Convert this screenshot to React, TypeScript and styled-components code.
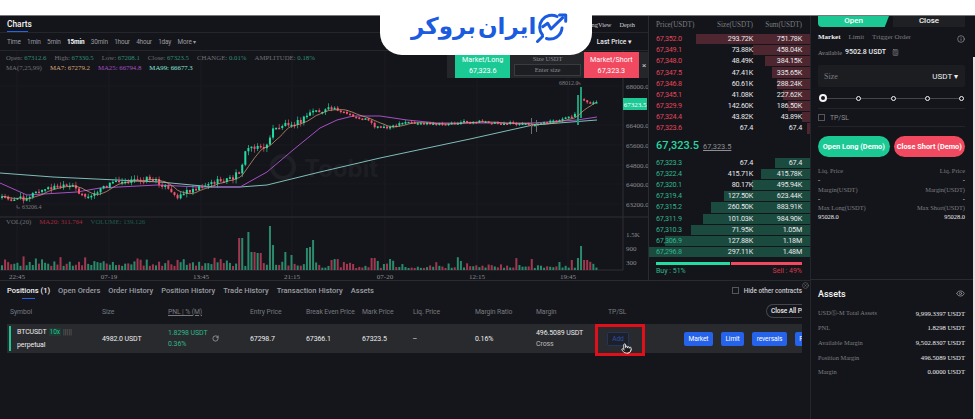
import styled, { createGlobalStyle } from "styled-components";
import { CircleX, Eye, Info, Pointer, RotateCw, Calculator } from "lucide-react";

const sans = `Roboto, "Noto Sans", sans-serif`;
const serif = `"Liberation Serif", serif`;
const green = "#1cc994";
const red = "#f1495f";
const blue = "#2563eb";
const COLUMNS = "92px 66px 82px 56px 56px 51px 62px 61px 72px 1fr";

const GlobalStyle = createGlobalStyle`
  html, body {
    margin: 0;
    background: #fff;
    overflow: hidden;
  }
  * {
    box-sizing: border-box;
  }
`;

const Page = styled.div`
  position: relative;
  width: 975px;
  height: 419px;
  overflow: hidden;
  display: flex;
  flex-direction: column;
  font-family: ${sans};
  color: #e8e8ea;
`;

const TopStrip = styled.div`
  height: 16px;
  flex: none;
  background: #fff;
  border-bottom: 1px solid #77787b;
`;

const Workspace = styled.div`
  flex: 1;
  display: flex;
  min-height: 0;
`;

const MainColumn = styled.div`
  width: 810px;
  display: flex;
  flex-direction: column;
`;

const Upper = styled.div`
  height: 265px;
  display: flex;
  border-bottom: 1px solid #2a2b30;
`;

const ChartPanel = styled.section`
  position: relative;
  width: 648px;
  background: #14151a;
`;

const ChartHeader = styled.div`
  height: 17px;
  display: flex;
  justify-content: space-between;
  align-items: center;
  padding: 0 13px 0 7px;
  border-bottom: 1px solid #25262b;
`;

const ChartTitle = styled.div`
  position: relative;
  font-size: 8.4px;
  font-weight: 500;
  color: #f4f4f5;
  line-height: 16px;
  width: 21px;

  &::after {
    content: "";
    position: absolute;
    left: 0;
    right: 0;
    bottom: 0;
    height: 1px;
    background: ${blue};
  }
`;

const ViewTabs = styled.div`
  display: flex;
  gap: 8px;
  font-family: ${serif};
  font-size: 6.4px;
  color: #cfd0d3;
`;

const IntervalBar = styled.div`
  height: 18px;
  display: flex;
  align-items: center;
  gap: 6.3px;
  padding: 0 16px 0 7px;
  border-bottom: 1px solid #25262b;
`;

const Interval = styled.span<{ $active?: boolean }>`
  font-size: 6.4px;
  letter-spacing: -0.15px;
  font-weight: ${(p) => (p.$active ? 700 : 400)};
  color: ${(p) => (p.$active ? "#f6f6f7" : "#9a9ca1")};
`;

const LastPrice = styled.span`
  margin-left: auto;
  font-size: 6.6px;
  font-weight: 500;
  color: #e8e8ea;
`;

const Legend = styled.div<{ $top: number; $gap: number }>`
  position: absolute;
  left: 6px;
  top: ${(p) => p.$top}px;
  display: flex;
  gap: ${(p) => p.$gap}px;
  font-family: ${serif};
  font-size: 6.8px;
  line-height: 9px;
  white-space: nowrap;
  color: #6f7176;
`;

const LegendItem = styled.span<{ $color?: string }>`
  color: ${(p) => p.$color ?? "inherit"};

  b {
    font-weight: 400;
    color: #2f9176;
  }
`;

const ChartSvg = styled.svg`
  display: block;
`;

const OrderStrip = styled.div`
  position: absolute;
  left: 447px;
  top: 36px;
  width: 201px;
  height: 26px;
  display: flex;
  align-items: stretch;
  padding-left: 8px;
  background: #25262a;
`;

const QuickTrade = styled.div<{ $color: string }>`
  width: 56px;
  background: ${(p) => p.$color};
  color: #fff;
  font-size: 7.2px;
  line-height: 11px;
  text-align: center;
  display: flex;
  flex-direction: column;
  justify-content: center;
`;

const SizeBox = styled.div`
  width: 67px;
  margin: 0 3px 0 4px;
  font-family: ${serif};
  font-size: 6.5px;
  color: #8b8d92;
  text-align: center;
  line-height: 10px;
  display: flex;
  flex-direction: column;
  justify-content: space-between;
  padding: 2px 0 3px;
`;

const SizeField = styled.div`
  border: 1px solid #3a3b40;
  background: #1d1e22;
  height: 12px;
`;

const StripClose = styled.span`
  margin-left: 1px;
  align-self: center;
  width: 8px;
  text-align: center;
  font-size: 8px;
  color: #c9cacd;
`;

const OrderBook = styled.section`
  width: 162px;
  padding: 0;
  background: #14151a;
  border-left: 1px solid #2a2b30;
  display: flex;
  flex-direction: column;
`;

const BookRow = styled.div`
  position: relative;
  height: 11.2px;
  display: grid;
  grid-template-columns: 50px 47px 49px;
  align-items: center;
  padding-left: 7px;
  font-size: 7.2px;
  letter-spacing: -0.2px;
  line-height: 10px;
  white-space: nowrap;
`;

const BookHead = styled(BookRow)`
  height: 17.4px;
  font-family: ${serif};
  font-size: 7.2px;
  letter-spacing: 0;
  color: #7b7d82;
`;

const Cell = styled.span`
  position: relative;
  text-align: right;
`;

const PriceCell = styled.span<{ $side: "ask" | "bid" }>`
  position: relative;
  color: ${(p) => (p.$side === "ask" ? "#e0455a" : "#2fb68c")};
`;

const DepthBar = styled.i<{ $side: "ask" | "bid" }>`
  position: absolute;
  right: 0;
  top: 0.5px;
  bottom: 0.5px;
  background: ${(p) => (p.$side === "ask" ? "#4d2630" : "#1b4a3e")};
`;

const MidRow = styled.div`
  height: 23px;
  display: flex;
  align-items: baseline;
  padding: 5px 0 0 7px;
  gap: 4px;
`;

const MidPrice = styled.span`
  font-size: 11px;
  font-weight: 500;
  color: #27d6a0;
`;

const MidMark = styled.span`
  font-size: 7.4px;
  color: #8d8f94;
  text-decoration: underline;
`;

const Ratio = styled.div`
  display: flex;
  gap: 1px;
  margin: 4px 8px 0 7px;
  height: 3px;
`;

const RatioPart = styled.div<{ $color: string; $grow: number }>`
  flex: ${(p) => p.$grow};
  background: ${(p) => p.$color};
`;

const RatioLabels = styled.div`
  display: flex;
  justify-content: space-between;
  margin: 1px 8px 0 7px;
  font-size: 7px;
  line-height: 10px;
`;

const RatioLabel = styled.span<{ $color: string }>`
  color: ${(p) => p.$color};
`;

const Positions = styled.section`
  flex: 1;
  background: #15161b;
  display: flex;
  flex-direction: column;
`;

const TabBar = styled.div`
  position: relative;
  height: 19px;
  display: flex;
  align-items: center;
  gap: 8px;
  padding-left: 7px;
`;

const Tab = styled.span<{ $active?: boolean }>`
  position: relative;
  font-size: 7.55px;
  font-weight: 500;
  white-space: nowrap;
  color: ${(p) => (p.$active ? "#f4f4f5" : "#9a9ca1")};

  ${(p) =>
    p.$active &&
    `&::after {
      content: "";
      position: absolute;
      left: 15px;
      width: 13px;
      bottom: -4px;
      height: 1px;
      background: ${blue};
    }`}
`;

const HideOther = styled.label`
  margin-left: auto;
  margin-right: 8px;
  display: flex;
  align-items: center;
  gap: 5px;
  font-size: 6.4px;
  font-weight: 500;
  color: #c8c9cc;
  white-space: nowrap;
`;

const Tick = styled.span`
  width: 7px;
  height: 7px;
  flex: none;
  border: 1px solid #55565b;
`;

const DismissIcon = styled(CircleX)`
  position: absolute;
  right: 1px;
  top: 1px;
  color: #6e7074;
`;

const TableHead = styled.div`
  height: 24px;
  width: 802px;
  padding-left: 10px;
  display: grid;
  grid-template-columns: ${COLUMNS};
  align-items: center;
  font-size: 6.8px;
  letter-spacing: -0.1px;
  color: #777a7f;
  white-space: nowrap;
`;

const Underlined = styled.span`
  text-decoration: underline;
`;

const TpHead = styled.div`
  display: flex;
  align-items: center;
  justify-content: space-between;
`;

const CloseAll = styled.div`
  width: 36px;
  height: 14px;
  margin-top: -2px;
  overflow: hidden;
  padding-left: 4px;
  border: 1px solid #45464b;
  border-right: none;
  border-radius: 8px 0 0 8px;
  font-size: 6.6px;
  line-height: 12px;
  font-weight: 500;
  white-space: nowrap;
  color: #e8e8ea;
`;

const PositionRow = styled.div`
  width: 795px;
  height: 29px;
  margin-left: 7px;
  padding-left: 3px;
  display: grid;
  grid-template-columns: ${COLUMNS};
  align-items: center;
  background: #292a2d;
  font-size: 7px;
  letter-spacing: -0.1px;
  color: #ececee;
  white-space: nowrap;
  overflow: hidden;
`;

const SymbolCell = styled.div`
  height: 25px;
  margin-left: -1px;
  border-left: 2px solid ${green};
  padding-left: 6px;
  display: flex;
  flex-direction: column;
  justify-content: space-around;
`;

const SymbolLine = styled.div`
  display: flex;
  align-items: center;
  gap: 2px;
`;

const Leverage = styled.span`
  color: ${green};
  background: #1e3a33;
  padding: 0 1px;
  font-size: 6.6px;
`;

const LevelBars = styled.span`
  color: #6f7176;
  letter-spacing: 0.2px;
  font-size: 6.6px;
`;

const StackCell = styled.div`
  display: flex;
  flex-direction: column;
  gap: 2px;
  line-height: 9px;
`;

const PnlCell = styled.div`
  display: flex;
  align-items: center;
  gap: 4px;
  color: #2fb68c;
  line-height: 9px;
`;

const MutedLine = styled.span`
  color: #b9babd;
`;

const AddButton = styled.div`
  width: 22px;
  height: 14px;
  margin-right: 47px;
  border: 1px solid #22345f;
  border-radius: 2px;
  background: #1d2027;
  color: #2a4fb0;
  font-size: 6.6px;
  line-height: 12px;
  text-align: center;
`;

const Actions = styled.div`
  display: flex;
  gap: 8px;
  margin-left: -1px;
`;

const ActionButton = styled.div`
  height: 14px;
  padding: 0 4.5px;
  background: ${blue};
  border-radius: 2px;
  color: #fff;
  font-size: 6.6px;
  line-height: 14px;
`;

const RedFrame = styled.div`
  position: absolute;
  left: 595px;
  top: 324px;
  width: 50px;
  height: 32px;
  border: 3px solid #e0101a;
  pointer-events: none;
`;

const HandCursor = styled(Pointer)`
  position: absolute;
  left: 621px;
  top: 343px;
  color: #f2f2f2;
  fill: #1b1b1d;
`;

const SidePanel = styled.aside`
  position: relative;
  width: 165px;
  background: #14151a;
  border-left: 1px solid #25262b;
  display: flex;
  flex-direction: column;
`;

const SideScroll = styled.div`
  position: absolute;
  right: 0;
  top: 41px;
  bottom: 0;
  width: 2px;
  background: #dfe3e4;
`;

const TradeCard = styled.div`
  height: 264px;
  padding: 0 10px 0 7px;
  border-bottom: 1px solid #2a2b30;
`;

const SideTabs = styled.div`
  display: flex;
  gap: 4px;
  height: 11px;
`;

const OpenTab = styled.div`
  width: 71px;
  background: ${green};
  color: #fff;
  font-size: 8px;
  font-weight: 500;
  line-height: 10px;
  text-align: center;
  clip-path: polygon(0 0, 100% 0, 94% 100%, 0 100%);
  border-radius: 0 0 0 4px;
`;

const CloseTab = styled.div`
  flex: 1;
  background: #1f2024;
  color: #f0f0f1;
  font-size: 8px;
  font-weight: 500;
  line-height: 10px;
  text-align: center;
`;

const OrderTypes = styled.div`
  display: flex;
  align-items: center;
  gap: 8px;
  margin-top: 2px;
  height: 15px;
  font-family: ${serif};
  font-size: 7px;
  color: #7c7e83;
`;

const OrderType = styled.span<{ $active?: boolean }>`
  color: ${(p) => (p.$active ? "#ececee" : "#7c7e83")};
  font-weight: ${(p) => (p.$active ? 700 : 400)};
`;

const InfoIcon = styled(Info)`
  margin-left: auto;
  margin-top: 5px;
  color: #9a9ca1;
`;

const Available = styled.div`
  display: flex;
  align-items: center;
  gap: 3px;
  height: 12px;
  margin-top: 2px;
  font-family: ${serif};
  font-size: 6.3px;
  color: #8b8d92;

  b {
    font-family: ${sans};
    font-size: 7px;
    font-weight: 500;
    color: #ececee;
  }
`;

const SizeInput = styled.div`
  margin-top: 7px;
  height: 22px;
  background: #1c1d21;
  display: flex;
  align-items: center;
  justify-content: space-between;
  padding: 0 7px 0 6px;
  border-radius: 2px;
  font-size: 8px;
  color: #ececee;
`;

const SizeLabel = styled.span`
  font-family: ${serif};
  color: #7c7e83;
`;

const Slider = styled.div`
  position: relative;
  margin-top: 8px;
  height: 6px;
  display: flex;
  justify-content: space-between;
  align-items: center;
  padding: 0 1px 0 1px;

  &::before {
    content: "";
    position: absolute;
    left: 2px;
    right: 2px;
    top: 2.5px;
    height: 1px;
    background: #45464b;
  }
`;

const Knob = styled.span<{ $first?: boolean }>`
  position: relative;
  width: ${(p) => (p.$first ? 8 : 5)}px;
  height: ${(p) => (p.$first ? 8 : 5)}px;
  border-radius: 50%;
  background: #14151a;
  border: ${(p) => (p.$first ? 2 : 1)}px solid #f4f4f5;
`;

const TpRow = styled.div`
  margin-top: 7px;
  height: 19px;
  display: flex;
  align-items: center;
  gap: 5px;
  border-top: 1px solid #232428;
  border-bottom: 1px solid #232428;
  font-size: 6.8px;
  color: #8b8d92;
`;

const CtaRow = styled.div`
  display: flex;
  gap: 4px;
  margin-top: 9px;
`;

const Cta = styled.div<{ $color: string }>`
  flex: 1;
  height: 21px;
  border-radius: 11px;
  background: ${(p) => p.$color};
  color: #fff;
  font-size: 7.4px;
  font-weight: 700;
  line-height: 21px;
  text-align: center;
  white-space: nowrap;
`;

const StatGrid = styled.div`
  margin-top: 9px;
  display: grid;
  grid-template-columns: 1fr 1fr;
  font-family: ${serif};
  font-size: 6.4px;
  line-height: 9.3px;
  color: #7c7e83;
`;

const Stat = styled.div<{ $right?: boolean; $bright?: boolean }>`
  text-align: ${(p) => (p.$right ? "right" : "left")};
  color: ${(p) => (p.$bright ? "#ececee" : "#7c7e83")};
  white-space: nowrap;
`;

const AssetsCard = styled.div`
  padding: 6px 10px 0 7px;
`;

const AssetsTitle = styled.div`
  display: flex;
  justify-content: space-between;
  align-items: center;
  height: 15px;
  font-size: 9px;
  font-weight: 500;
  color: #f4f4f5;
  margin-bottom: 5px;
`;

const AssetRow = styled.div`
  display: flex;
  justify-content: space-between;
  align-items: center;
  height: 14.6px;
  font-family: ${serif};
  font-size: 6.4px;
  color: #7c7e83;
`;

const AssetValue = styled.span`
  font-family: ${serif};
  font-size: 6.7px;
  color: #ececee;
`;

const LogoPill = styled.div`
  position: absolute;
  left: 380px;
  top: 0;
  width: 212px;
  height: 55px;
  padding: 0 24px 0 31px;
  background: #fff;
  border-radius: 0 0 22px 22px;
  display: flex;
  align-items: center;
  justify-content: space-between;
`;

const LogoText = styled.span`
  direction: rtl;
  font-family: "DejaVu Sans", sans-serif;
  font-size: 23px;
  font-weight: 700;
  word-spacing: -6px;
  color: #1a5be0;
  white-space: nowrap;
  margin-top: -4px;
`;

const LogoSvg = styled.svg`
  flex: none;
  margin-top: -2px;
`;

// ---- chart data, in page pixels ----
type Pt = [number, number];

const PRICE: Pt[] = [
  [2, 197], [16, 199], [25, 198], [35, 193], [53, 187], [73, 187], [88, 198], [100, 190], [117, 180],
  [133, 181], [150, 178], [163, 185], [175, 197], [190, 190], [203, 185], [233, 178], [240, 170],
  [247, 148], [260, 145], [263, 152], [273, 130], [287, 123], [300, 122], [313, 110], [320, 112],
  [335, 108], [353, 117], [370, 120], [375, 127], [392, 127], [407, 122], [437, 125], [460, 122],
  [487, 122], [533, 125], [553, 121], [574, 117], [578, 108], [581, 100], [587, 102], [597, 103],
];
const MA25: Pt[] = [
  [0, 183], [27, 195], [77, 192], [100, 188], [157, 185], [200, 187], [240, 187], [267, 172], [293, 150],
  [320, 128], [337, 120], [353, 116], [380, 116], [407, 120], [437, 123], [533, 123], [577, 120], [597, 117],
];
const MA99: Pt[] = [
  [0, 173], [53, 177], [117, 180], [160, 182], [213, 187], [240, 187], [267, 185], [320, 172],
  [380, 158], [470, 139], [533, 125], [597, 120],
];
const VOLUME_PEAKS: Pt[] = [
  [240, 32], [243, 32], [249, 38], [253, 18], [258, 17], [261, 17], [271, 44], [274, 25], [286, 18], [293, 15],
  [308, 22], [311, 23], [314, 30], [332, 10], [372, 12], [375, 12], [391, 11], [531, 11], [560, 8], [572, 10],
  [577, 12], [581, 24], [584, 10], [587, 10],
];
const Y_LABELS: [string, number][] = [
  ["68000.0", 86], ["66400.0", 125], ["65600.0", 145], ["64800.0", 165], ["64000.0", 184], ["63200.0", 204],
  ["1.5K", 234], ["900", 248], ["300", 262],
];
const X_LABELS: [string, number][] = [
  ["22:45", 17], ["07-19", 109], ["13:45", 201], ["21:15", 292], ["07-20", 385], ["12:15", 477], ["19:45", 568],
];

const rnd = (i: number) => {
  const v = Math.sin(i * 12.9898 + 4.1) * 43758.5453;
  return v - Math.floor(v);
};

const priceAt = (x: number) => {
  for (let i = 1; i < PRICE.length; i++) {
    if (x <= PRICE[i][0]) {
      const [x0, y0] = PRICE[i - 1];
      const [x1, y1] = PRICE[i];
      return y0 + ((x - x0) / (x1 - x0)) * (y1 - y0);
    }
  }
  return PRICE[PRICE.length - 1][1];
};

const toPoints = (pts: Pt[]) => pts.map((p) => p.join(",")).join(" ");

const candles = Array.from({ length: 194 }, (_, i) => {
  const x = 2 + i * 3.08;
  const amp = x < 330 ? 2.6 : 1.4;
  const close = priceAt(x) + (rnd(i) - 0.5) * amp * 2;
  return { i, x, close };
}).map((c, idx, all) => {
  const open = idx ? all[idx - 1].close : c.close + 1;
  const up = c.close < open;
  const top = Math.min(open, c.close);
  const bottom = Math.max(open, c.close);
  const reach = c.x < 330 ? 4 : 2;
  const peak = VOLUME_PEAKS.find((p) => Math.abs(p[0] - c.x) < 1.6);
  return {
    ...c,
    up,
    top,
    height: Math.max(bottom - top, 1.5),
    high: top - rnd(c.i + 300) * reach,
    low: bottom + rnd(c.i + 700) * reach,
    volume: peak ? peak[1] : 2 + rnd(c.i + 50) * rnd(c.i + 90) * 12 + (c.x < 320 ? 2 : 0),
  };
});

const ma7 = candles.map((c, i) => {
  const slice = candles.slice(Math.max(0, i - 6), i + 1);
  return [c.x, slice.reduce((sum, s) => sum + s.close, 0) / slice.length] as Pt;
});

const PriceChart = () => (
  <ChartSvg width={648} height={230} viewBox="0 51 648 230">
    {X_LABELS.map(([, x]) => (
      <line key={x} x1={x} x2={x} y1={51} y2={270} stroke="#1a1b20" />
    ))}
    {Y_LABELS.slice(0, 6).map(([, y]) => (
      <line key={y} x1={0} x2={623} y1={y} y2={y} stroke="#18191e" />
    ))}
    <line x1={623} x2={623} y1={51} y2={270} stroke="#2e2f34" />
    <line x1={0} x2={648} y1={217} y2={217} stroke="#2e2f34" />
    <line x1={0} x2={623} y1={270} y2={270} stroke="#2e2f34" />

    <circle cx={283} cy={167} r={11} fill="none" stroke="#1f2025" strokeWidth={4} />
    <text x={304} y={177} fontFamily="Inter, sans-serif" fontSize={24} fontWeight={700} fill="#1d1e23">
      Toobit
    </text>

    {candles.map((c) => (
      <rect
        key={c.i}
        x={c.x - 1}
        y={270 - c.volume}
        width={2}
        height={c.volume}
        fill={c.up ? "#2a8a6c" : "#a2384f"}
      />
    ))}
    <polyline points={toPoints(MA99)} fill="none" stroke="#7fbdb8" strokeWidth={1} />
    <polyline points={toPoints(MA25)} fill="none" stroke="#a64fc4" strokeWidth={1} />
    {candles.map((c) => (
      <g key={c.i} fill={c.up ? "#22dca4" : "#f4566f"}>
        <rect x={c.x - 0.4} y={c.high} width={0.8} height={c.low - c.high} opacity={0.8} />
        <rect x={c.x - 1} y={c.top} width={2} height={c.height} />
      </g>
    ))}
    <rect x={577} y={95} width={2} height={30} fill="#1f9d78" />
    <rect x={580} y={87} width={2} height={31} fill="#1f9d78" />
    <rect x={531} y={118} width={1} height={16} fill="#6d6f74" />
    <rect x={536} y={120} width={1} height={12} fill="#6d6f74" />

    <polyline points={toPoints(ma7)} fill="none" stroke="#d9a57c" strokeWidth={0.7} />

    <g fontFamily={serif} fontSize={6} fill="#7c7e83">
      <text x={559} y={85}>68012.0</text>
      <path d="M577 83h3v2" fill="none" stroke="#7c7e83" strokeWidth={0.6} />
      <text x={22} y={209}>63206.4</text>
      <path d="M17 205v3h3" fill="none" stroke="#7c7e83" strokeWidth={0.6} />
    </g>
    <g fontFamily={serif} fontSize={7} fill="#8b8d92">
      {Y_LABELS.map(([label, y]) => (
        <text key={label} x={626} y={y + 2.5}>{label}</text>
      ))}
      {X_LABELS.map(([label, x]) => (
        <text key={label} x={x} y={279} textAnchor="middle">{label}</text>
      ))}
    </g>
    <rect x={623} y={98} width={24} height={12} fill={green} />
    <text x={635} y={106.5} textAnchor="middle" fontFamily={serif} fontSize={7} fill="#fff">67323.5</text>
  </ChartSvg>
);

const LogoMark = () => (
  <LogoSvg width={33} height={32} viewBox="0 0 33 32" fill="none" stroke="#1a5be0" strokeWidth={3} strokeLinecap="round" strokeLinejoin="round">
    <path d="M6.5 24a12 12 0 0 1 14.5-18.5" />
    <path d="M26 17a12 12 0 0 1-15.5 10.5" />
    <path d="M1.5 30.5l5-5" />
    <path d="M6.7 15.7l5-3.4 3.3 5.7 11.7-11.3" />
    <path d="M23.5 4h6.2v6.2" />
  </LogoSvg>
);

const ASKS = [
  ["67,352.0", "293.72K", "751.78K", 114],
  ["67,349.1", "73.88K", "458.04K", 57],
  ["67,348.0", "48.49K", "384.15K", 45],
  ["67,347.5", "47.41K", "335.65K", 38],
  ["67,346.8", "60.61K", "288.24K", 33],
  ["67,345.1", "41.08K", "227.62K", 27],
  ["67,329.9", "142.60K", "186.50K", 22],
  ["67,324.4", "43.82K", "43.89K", 8],
  ["67,323.6", "67.4", "67.4", 3],
] as const;

const BIDS = [
  ["67,323.3", "67.4", "67.4", 35],
  ["67,322.4", "415.71K", "415.78K", 49],
  ["67,320.1", "80.17K", "495.94K", 58],
  ["67,319.4", "127.50K", "623.44K", 86],
  ["67,315.2", "260.50K", "883.91K", 99],
  ["67,311.9", "101.03K", "984.90K", 107],
  ["67,310.3", "71.95K", "1.05M", 119],
  ["67,306.9", "127.88K", "1.18M", 145],
  ["67,296.8", "297.11K", "1.48M", 161],
] as const;

const INTERVALS = ["Time", "1min", "5min", "15min", "30min", "1hour", "4hour", "1day"];
const TABS = ["Open Orders", "Order History", "Position History", "Trade History", "Transaction History", "Assets"];
const ASSETS = [
  ["USD\u24C8-M Total Assets", "9,999.3397 USDT"],
  ["PNL", "1.8298 USDT"],
  ["Available Margin", "9,502.8307 USDT"],
  ["Position Margin", "496.5089 USDT"],
  ["Margin", "0.0000 USDT"],
];

const BookSide = ({ side, rows }: { side: "ask" | "bid"; rows: typeof ASKS | typeof BIDS }) => (
  <>
    {rows.map(([price, size, sum, depth]) => (
      <BookRow key={price}>
        <DepthBar $side={side} style={{ width: depth }} />
        <PriceCell $side={side}>{price}</PriceCell>
        <Cell>{size}</Cell>
        <Cell>{sum}</Cell>
      </BookRow>
    ))}
  </>
);

export default function App() {
  return (
    <Page>
      <GlobalStyle />
      <TopStrip />
      <Workspace>
        <MainColumn>
          <Upper>
            <ChartPanel>
              <ChartHeader>
                <ChartTitle>Charts</ChartTitle>
                <ViewTabs>
                  <span>TradingView</span>
                  <span>Depth</span>
                </ViewTabs>
              </ChartHeader>
              <IntervalBar>
                {INTERVALS.map((t) => (
                  <Interval key={t} $active={t === "15min"}>{t}</Interval>
                ))}
                <Interval>More ▾</Interval>
                <LastPrice>Last Price ▾</LastPrice>
              </IntervalBar>
              <PriceChart />
              <Legend $top={37} $gap={8}>
                <LegendItem>Open: <b>67312.6</b></LegendItem>
                <LegendItem>High: <b>67330.5</b></LegendItem>
                <LegendItem>Low: <b>67208.1</b></LegendItem>
                <LegendItem>Close: <b>67323.5</b></LegendItem>
                <LegendItem>CHANGE: <b>0.01%</b></LegendItem>
                <LegendItem>AMPLITUDE: <b>0.18%</b></LegendItem>
              </Legend>
              <Legend $top={47} $gap={8}>
                <LegendItem>MA(7,25,99)</LegendItem>
                <LegendItem $color="#dba878">MA7: 67279.2</LegendItem>
                <LegendItem $color="#a64fc4">MA25: 66794.8</LegendItem>
                <LegendItem $color="#86e5dd">MA99: 66677.3</LegendItem>
              </Legend>
              <Legend $top={201} $gap={8}>
                <LegendItem>VOL(20)</LegendItem>
                <LegendItem $color="#a82a3c">MA20: 311.764</LegendItem>
                <LegendItem $color="#1f5c4d">VOLUME: 139.126</LegendItem>
              </Legend>
              <OrderStrip>
                <QuickTrade $color="#1bc995">
                  <span>Market/Long</span>
                  <span>67,323.6</span>
                </QuickTrade>
                <SizeBox>
                  Size USDT
                  <SizeField>Enter size</SizeField>
                </SizeBox>
                <QuickTrade $color={red}>
                  <span>Market/Short</span>
                  <span>67,323.3</span>
                </QuickTrade>
                <StripClose>×</StripClose>
              </OrderStrip>
            </ChartPanel>
            <OrderBook>
              <BookHead>
                <span>Price(USDT)</span>
                <Cell>Size(USDT)</Cell>
                <Cell>Sum(USDT)</Cell>
              </BookHead>
              <BookSide side="ask" rows={ASKS} />
              <MidRow>
                <MidPrice>67,323.5</MidPrice>
                <MidMark>67,323.5</MidMark>
              </MidRow>
              <BookSide side="bid" rows={BIDS} />
              <Ratio>
                <RatioPart $color="#22dca4" $grow={51} />
                <RatioPart $color={red} $grow={49} />
              </Ratio>
              <RatioLabels>
                <RatioLabel $color="#2fb68c">Buy : 51%</RatioLabel>
                <RatioLabel $color="#d8384d">Sell : 49%</RatioLabel>
              </RatioLabels>
            </OrderBook>
          </Upper>
          <Positions>
            <TabBar>
              <Tab $active>Positions (1)</Tab>
              {TABS.map((t) => (
                <Tab key={t}>{t}</Tab>
              ))}
              <HideOther>
                <Tick />
                Hide other contracts
              </HideOther>
              <DismissIcon size={7} />
            </TabBar>
            <TableHead>
              <span>Symbol</span>
              <span>Size</span>
              <Underlined>PNL | % (M)</Underlined>
              <span>Entry Price</span>
              <span>Break Even Price</span>
              <span>Mark Price</span>
              <span>Liq. Price</span>
              <span>Margin Ratio</span>
              <span>Margin</span>
              <TpHead>
                TP/SL
                <CloseAll>Close All Po</CloseAll>
              </TpHead>
            </TableHead>
            <PositionRow>
              <SymbolCell>
                <SymbolLine>
                  BTCUSDT <Leverage>10x</Leverage> <LevelBars>|||||</LevelBars>
                </SymbolLine>
                <span>perpetual</span>
              </SymbolCell>
              <span>4982.0 USDT</span>
              <PnlCell>
                <StackCell>
                  <span>1.8298 USDT</span>
                  <span>0.36%</span>
                </StackCell>
                <RotateCw size={7} color="#c8c9cc" />
              </PnlCell>
              <span>67298.7</span>
              <span>67366.1</span>
              <span>67323.5</span>
              <span>--</span>
              <span>0.16%</span>
              <StackCell>
                <span>496.5089 USDT</span>
                <MutedLine>Cross</MutedLine>
              </StackCell>
              <Actions>
                <AddButton>Add</AddButton>
                <ActionButton>Market</ActionButton>
                <ActionButton>Limit</ActionButton>
                <ActionButton>reversals</ActionButton>
                <ActionButton>Fl</ActionButton>
              </Actions>
            </PositionRow>
          </Positions>
        </MainColumn>
        <SidePanel>
          <TradeCard>
            <SideTabs>
              <OpenTab>Open</OpenTab>
              <CloseTab>Close</CloseTab>
            </SideTabs>
            <OrderTypes>
              <OrderType $active>Market</OrderType>
              <OrderType>Limit</OrderType>
              <OrderType>Trigger Order</OrderType>
              <InfoIcon size={8} />
            </OrderTypes>
            <Available>
              Available <b>9502.8 USDT</b>
              <Calculator size={7} color="#8b8d92" style={{ marginLeft: 3 }} />
            </Available>
            <SizeInput>
              <SizeLabel>Size</SizeLabel>
              <span>USDT ▾</span>
            </SizeInput>
            <Slider>
              <Knob $first />
              <Knob />
              <Knob />
              <Knob />
              <Knob />
            </Slider>
            <TpRow>
              <Tick />
              TP/SL
            </TpRow>
            <CtaRow>
              <Cta $color="#1bc995">Open Long (Demo)</Cta>
              <Cta $color={red}>Close Short (Demo)</Cta>
            </CtaRow>
            <StatGrid>
              <Stat>Liq. Price</Stat>
              <Stat $right>Liq. Price</Stat>
              <Stat $bright>-</Stat>
              <Stat $right $bright>-</Stat>
              <Stat>Margin(USDT)</Stat>
              <Stat $right>Margin(USDT)</Stat>
              <Stat $bright>-</Stat>
              <Stat $right $bright>-</Stat>
              <Stat>Max Long(USDT)</Stat>
              <Stat $right>Max Short(USDT)</Stat>
              <Stat $bright>95028.0</Stat>
              <Stat $right $bright>95028.0</Stat>
            </StatGrid>
          </TradeCard>
          <AssetsCard>
            <AssetsTitle>
              Assets
              <Eye size={9} color="#9a9ca1" />
            </AssetsTitle>
            {ASSETS.map(([label, value]) => (
              <AssetRow key={label}>
                {label}
                <AssetValue>{value}</AssetValue>
              </AssetRow>
            ))}
          </AssetsCard>
          <SideScroll />
        </SidePanel>
      </Workspace>
      <RedFrame />
      <HandCursor size={11} />
      <LogoPill>
        <LogoText>ایران بروکر</LogoText>
        <LogoMark />
      </LogoPill>
    </Page>
  );
}
